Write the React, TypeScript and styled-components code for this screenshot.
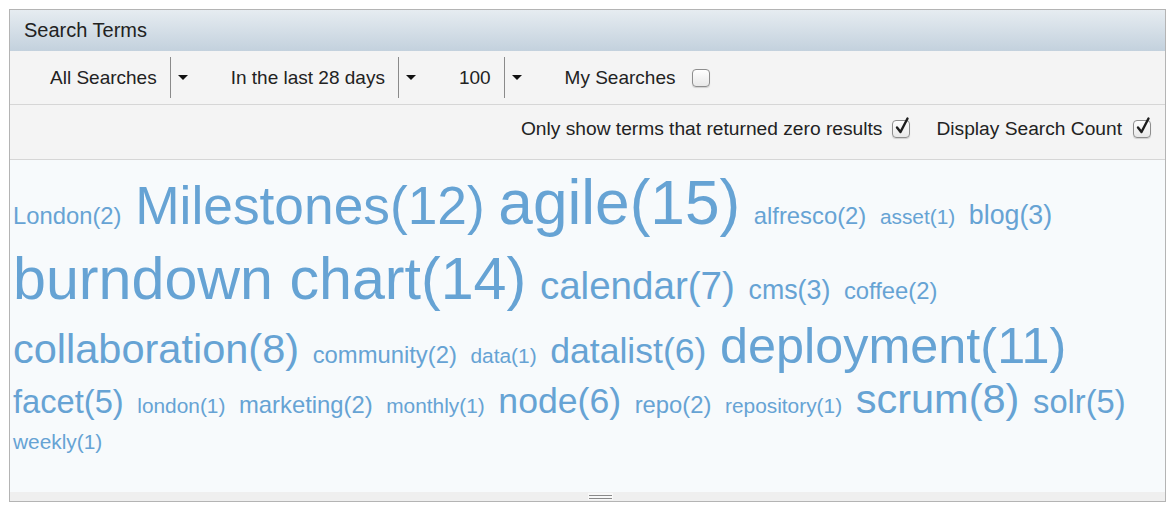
import React from "react";
import styled, { createGlobalStyle } from "styled-components";

const GlobalStyle = createGlobalStyle`
  html, body {
    margin: 0;
    padding: 0;
    background: #ffffff;
  }
  body {
    font-family: "Liberation Sans", Arial, sans-serif;
    color: #222222;
  }
`;

const Page = styled.div`
  padding: 9px 0 0 9px;
`;

const Panel = styled.section`
  width: 1157px;
  height: 493px;
  box-sizing: border-box;
  border: 1px solid #b4b4b4;
  display: flex;
  flex-direction: column;
  background: #f4f4f4;
`;

const Header = styled.div`
  height: 41px;
  flex: none;
  display: flex;
  align-items: center;
  padding-left: 14px;
  background: linear-gradient(#e6ecf1, #c3d1dd);
  font-size: 20px;
  color: #222;
`;

const Toolbar = styled.div`
  height: 54px;
  flex: none;
  box-sizing: border-box;
  border-bottom: 1px solid #d6d6d6;
  display: flex;
  align-items: center;
  gap: 43px;
  padding-left: 40px;
  font-size: 19px;
`;

const OptionsBar = styled.div`
  height: 55px;
  flex: none;
  box-sizing: border-box;
  border-bottom: 1px solid #d6d6d6;
  display: flex;
  align-items: center;
  justify-content: flex-end;
  padding: 0 14px 7px 0;
  font-size: 19.2px;
`;

const SplitButton = styled.div`
  display: flex;
  align-items: center;
  height: 41px;
`;

const ButtonLabel = styled.span`
  padding-right: 13px;
  white-space: nowrap;
`;

const Divider = styled.span`
  width: 1px;
  height: 41px;
  background: #8a8a8a;
`;

const Arrow = styled.span`
  margin-left: 7px;
  width: 0;
  height: 0;
  border-left: 5px solid transparent;
  border-right: 5px solid transparent;
  border-top: 5px solid #111;
`;

const Option = styled.label<{ $gap: number }>`
  display: flex;
  align-items: center;
  gap: ${(p) => p.$gap}px;
  white-space: nowrap;
`;

const OptionGroup = styled.div`
  display: flex;
  align-items: center;
  gap: 26px;
`;

const Box = styled.span`
  position: relative;
  width: 18px;
  height: 18px;
  box-sizing: border-box;
  border: 1px solid #8e8e8e;
  border-radius: 4px;
  background: linear-gradient(#ffffff, #e8e8e8);
  box-shadow: 0 1px 1px rgba(0, 0, 0, 0.15);

  svg {
    position: absolute;
    left: 1px;
    top: -5px;
  }
`;

const Cloud = styled.div`
  flex: 1;
  background: #f7fafc;
  padding: 4px 2px 0 3px;
  line-height: 0;
  font-size: 13px;
`;

const Tag = styled.a<{ $size: number }>`
  font-size: ${(p) => p.$size}px;
  line-height: max(1.54em - 17.5px, 36px);
  color: #66a3d4;
  text-decoration: none;
  white-space: nowrap;
  margin-right: 10px;
`;

const Gutter = styled.div`
  height: 9px;
  flex: none;
  background: #efefef;
  display: flex;
  justify-content: center;
  padding-left: 26px;
`;

const Grip = styled.span`
  width: 25px;
  height: 7px;
  margin-top: 1px;
  background: #f8f8f8;
  display: flex;
  flex-direction: column;
  justify-content: center;
  gap: 2px;

  &::before,
  &::after {
    content: "";
    height: 1px;
    margin: 0 1px;
    background: #8a8a8a;
  }
`;

const Checkbox = ({ checked }: { checked?: boolean }) => (
  <Box>
    {checked && (
      <svg width="18" height="20" viewBox="0 0 18 20">
        <path
          d="M3 11.5 L6.5 16 L13.5 2.5"
          fill="none"
          stroke="#1e1e1e"
          strokeWidth="2.4"
          strokeLinecap="round"
          strokeLinejoin="round"
        />
      </svg>
    )}
  </Box>
);

const tags: [string, number][] = [
  ["London", 2],
  ["Milestones", 12],
  ["agile", 15],
  ["alfresco", 2],
  ["asset", 1],
  ["blog", 3],
  ["burndown chart", 14],
  ["calendar", 7],
  ["cms", 3],
  ["coffee", 2],
  ["collaboration", 8],
  ["community", 2],
  ["data", 1],
  ["datalist", 6],
  ["deployment", 11],
  ["facet", 5],
  ["london", 1],
  ["marketing", 2],
  ["monthly", 1],
  ["node", 6],
  ["repo", 2],
  ["repository", 1],
  ["scrum", 8],
  ["solr", 5],
  ["weekly", 1],
];

// font size grows with the search count
const sizeFor = (count: number) => 17.9 + count * 2.95;

export default function App() {
  return (
    <Page>
      <GlobalStyle />
      <Panel>
        <Header>Search Terms</Header>
        <Toolbar>
          <SplitButton>
            <ButtonLabel>All Searches</ButtonLabel>
            <Divider />
            <Arrow />
          </SplitButton>
          <SplitButton>
            <ButtonLabel>In the last 28 days</ButtonLabel>
            <Divider />
            <Arrow />
          </SplitButton>
          <SplitButton>
            <ButtonLabel>100</ButtonLabel>
            <Divider />
            <Arrow />
          </SplitButton>
          <Option $gap={17}>
            My Searches
            <Checkbox />
          </Option>
        </Toolbar>
        <OptionsBar>
          <OptionGroup>
            <Option $gap={10}>
              Only show terms that returned zero results
              <Checkbox checked />
            </Option>
            <Option $gap={11}>
              Display Search Count
              <Checkbox checked />
            </Option>
          </OptionGroup>
        </OptionsBar>
        <Cloud>
          {tags.map(([name, count]) => (
            <React.Fragment key={name}>
              <Tag href="#" $size={sizeFor(count)}>
                {name}({count})
              </Tag>{" "}
            </React.Fragment>
          ))}
        </Cloud>
        <Gutter>
          <Grip />
        </Gutter>
      </Panel>
    </Page>
  );
}
